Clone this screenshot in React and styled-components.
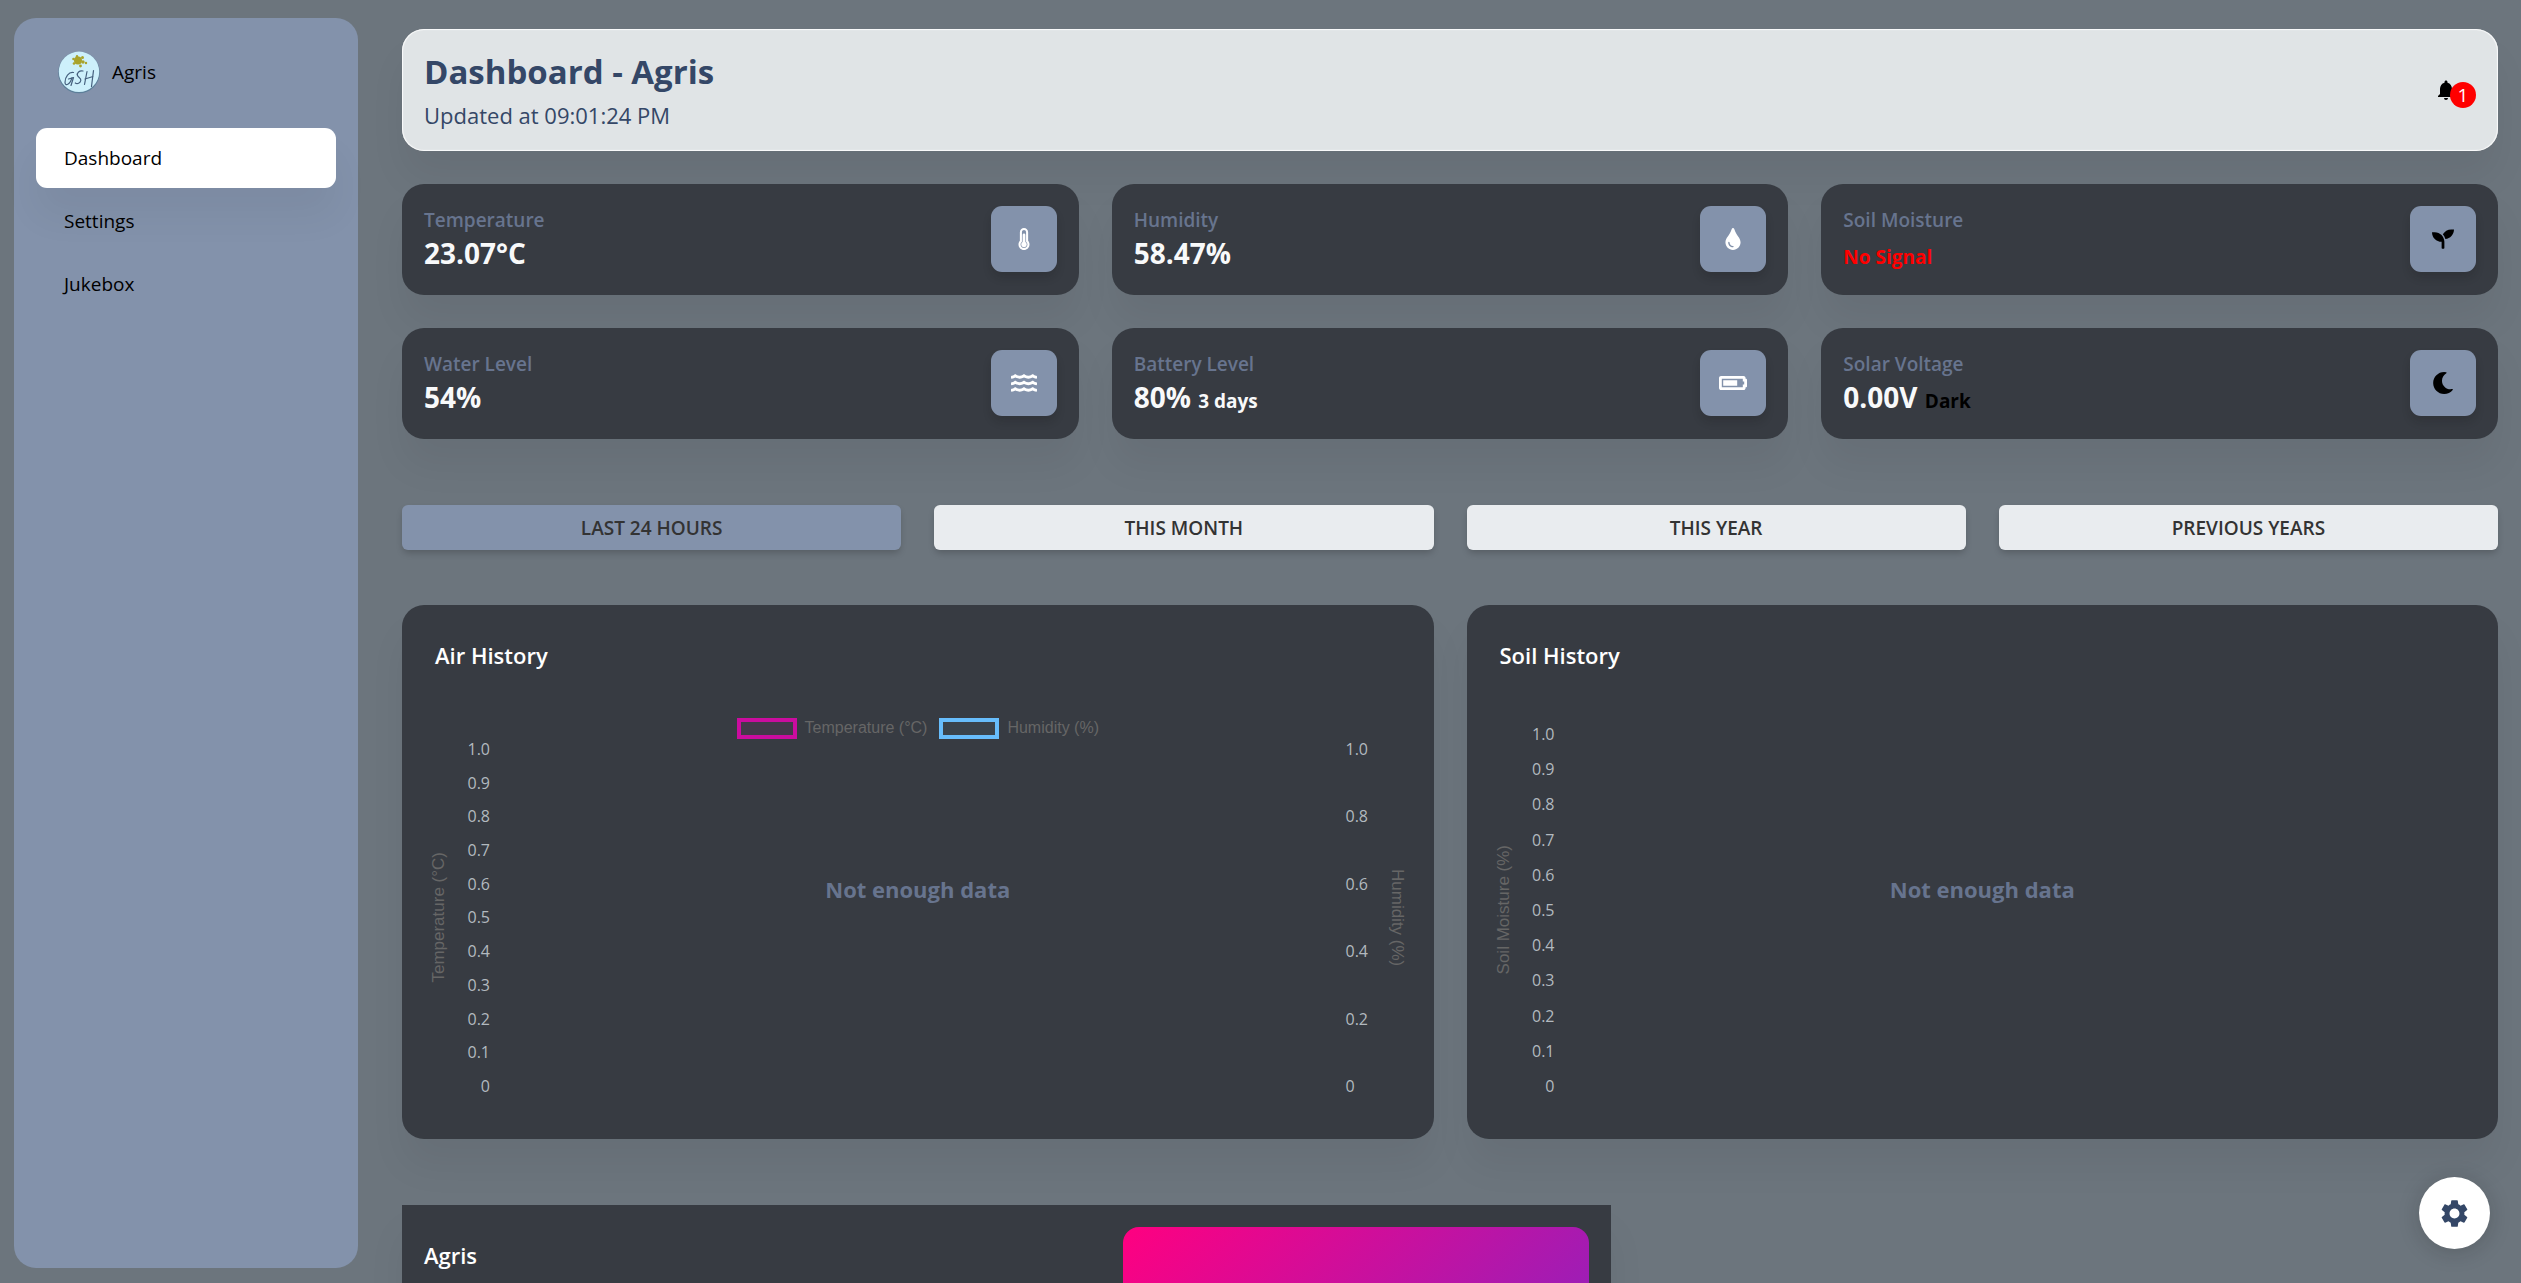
import React from "react";
import styled, { createGlobalStyle } from "styled-components";
import {
  FaBatteryThreeQuarters,
  FaMoon,
  FaSeedling,
  FaThermometerThreeQuarters,
  FaTint,
  FaWater,
} from "react-icons/fa";
import { MdNotifications, MdSettings } from "react-icons/md";

const GlobalStyle = createGlobalStyle`
  *, *::before, *::after { box-sizing: border-box; }
  body {
    margin: 0;
    background: #6c757d;
    color: #000;
    font-family: "Open Sans", "Noto Sans", sans-serif;
    font-size: 19px;
  }
  h1, h2, p { margin: 0; }
  button, a { font: inherit; color: inherit; }
`;

const Shell = styled.div`
  display: flex;
  height: 100vh;
  overflow: hidden;
`;

const Sidebar = styled.aside`
  flex: 0 0 344px;
  margin: 18px 0 15px 14px;
  padding: 32px 22px;
  border-radius: 22px;
  background: #8392ab;
`;

const Brand = styled.a`
  display: flex;
  align-items: center;
  gap: 12px;
  height: 44px;
  padding-left: 22px;
  margin-bottom: 34px;
  font-weight: 500;
  line-height: 28px;
  text-decoration: none;
`;

const NavList = styled.nav`
  display: flex;
  flex-direction: column;
  gap: 3px;
`;

const NavLink = styled.a`
  display: flex;
  align-items: center;
  height: 60px;
  padding: 0 28px;
  border-radius: 11px;
  line-height: 28px;
  font-weight: 500;
  text-decoration: none;
  background: ${(p) => (p.$active ? "#fff" : "transparent")};
  box-shadow: ${(p) => (p.$active ? "0 28px 37px 0 rgba(0, 0, 0, 0.05)" : "none")};
`;

const Main = styled.main`
  flex: 1;
  min-width: 0;
  overflow-y: auto;
  scrollbar-width: none;
  padding: 29px 23px 0 44px;
`;

const shadow = "0 28px 37px 0 rgba(0, 0, 0, 0.05)";

const Header = styled.header`
  display: flex;
  justify-content: space-between;
  align-items: center;
  height: 122px;
  padding: 6px 22px 0;
  margin-bottom: 33px;
  border-radius: 22px;
  background: #e0e4e6;
  color: #344767;
  box-shadow: inset 0 0 1px 1px rgba(254, 254, 254, 0.9), ${shadow};
`;

const Title = styled.h1`
  font-size: 33px;
  line-height: 44px;
  font-weight: 700;
`;

const Updated = styled.p`
  font-size: 22px;
  line-height: 42px;
`;

const BellButton = styled.button`
  position: relative;
  display: flex;
  width: 42px;
  height: 30px;
  padding: 0;
  border: 0;
  background: none;
  color: #000;
`;

const Badge = styled.span`
  position: absolute;
  right: 0;
  bottom: 0;
  width: 26px;
  height: 26px;
  border-radius: 13px;
  background: #f00;
  color: #fff;
  font-size: 19px;
  line-height: 26px;
  text-align: center;
`;

const StatGrid = styled.section`
  display: grid;
  grid-template-columns: repeat(3, 1fr);
  gap: 33px;
`;

const StatCard = styled.article`
  display: flex;
  justify-content: space-between;
  align-items: flex-start;
  height: 111px;
  padding: 22px;
  border-radius: 22px;
  background: #373b42;
  box-shadow: ${shadow};
`;

const StatLabel = styled.p`
  font-size: 19px;
  line-height: 28px;
  font-weight: 600;
  color: #67748e;
`;

const StatValue = styled.p`
  font-size: 28px;
  line-height: 38px;
  font-weight: 700;
  color: #f8f9fa;
`;

const StatNote = styled.span`
  font-size: 19px;
  color: ${(p) => p.$color};
`;

const IconTile = styled.div`
  display: grid;
  place-items: center;
  width: 66px;
  height: 66px;
  border-radius: 11px;
  background: #8392ab;
  color: ${(p) => p.$color};
  font-size: ${(p) => p.$size}px;
  box-shadow: 0 6px 10px -1px rgba(20, 20, 20, 0.2);
`;

const RangeBar = styled.div`
  display: grid;
  grid-template-columns: repeat(4, 1fr);
  gap: 33px;
  margin: 66px 0 55px;
`;

const RangeButton = styled.button`
  height: 45px;
  border: 0;
  border-radius: 6px;
  background: ${(p) => (p.$active ? "#8392ab" : "#e9ecef")};
  color: #333;
  font-size: 19px;
  font-weight: 600;
  line-height: 28px;
  box-shadow: 0 4px 7px -1px rgba(0, 0, 0, 0.2);
`;

const ChartGrid = styled.section`
  display: grid;
  grid-template-columns: repeat(2, 1fr);
  gap: 33px;
  margin-bottom: 66px;
`;

const ChartCard = styled.article`
  position: relative;
  display: flex;
  flex-direction: column;
  height: 534px;
  padding: 33px 22px 42px;
  border-radius: 22px;
  background: #373b42;
  box-shadow: ${shadow};
`;

const CardTitle = styled.h2`
  padding-left: ${(p) => p.$indent || 0}px;
  font-size: 22px;
  line-height: 34px;
  font-weight: 600;
  color: #fff;
`;

const Legend = styled.ul`
  display: flex;
  justify-content: center;
  align-items: center;
  gap: 12px;
  height: 20px;
  margin: 46px 0 0;
  padding: 0;
  list-style: none;
`;

const LegendItem = styled.li`
  display: flex;
  align-items: center;
  gap: 8px;
  color: #666;
  font-family: "Liberation Sans", Arial, sans-serif;
  font-size: 16px;
  line-height: 20px;

  &::before {
    content: "";
    width: 60px;
    height: 21px;
    border: 4px solid ${(p) => p.$color};
    background: ${(p) => p.$fill};
  }
`;

const Plot = styled.div`
  flex: 1;
  display: flex;
  justify-content: space-between;
  margin-top: ${(p) => p.$top}px;
`;

const Axis = styled.div`
  display: flex;
  flex-direction: ${(p) => (p.$right ? "row-reverse" : "row")};
  gap: 12px;
`;

const AxisTitle = styled.span`
  align-self: center;
  width: 30px;
  writing-mode: vertical-rl;
  rotate: ${(p) => (p.$right ? "0deg" : "180deg")};
  font-family: "Liberation Sans", Arial, sans-serif;
  font-size: 17px;
  line-height: 30px;
  text-align: center;
  color: #666;
`;

const Ticks = styled.ol`
  display: flex;
  flex-direction: column;
  justify-content: space-between;
  width: 24px;
  margin: 0;
  padding: 0;
  list-style: none;
  color: #b2b9bf;
  font-size: 16px;
  line-height: 22px;
  text-align: ${(p) => (p.$right ? "left" : "right")};
`;

const EmptyNote = styled.p`
  position: absolute;
  inset: 0;
  top: 34px;
  display: grid;
  place-items: center;
  color: #67748e;
  font-size: 22px;
  font-weight: 700;
`;

const PlayerCard = styled.section`
  display: flex;
  justify-content: space-between;
  width: calc(58% - 7px);
  height: 300px;
  padding: 22px;
  background: #373b42;
  box-shadow: ${shadow};
`;

const PlayerText = styled.div`
  padding-top: 11px;
`;

const Cover = styled.div`
  width: 40%;
  border-radius: 16px;
  background: linear-gradient(135deg, #ff0080, #7928ca);
`;

const Fab = styled.button`
  position: fixed;
  right: 31px;
  bottom: 34px;
  display: grid;
  place-items: center;
  width: 71px;
  height: 72px;
  padding: 0;
  border: 0;
  border-radius: 50%;
  background: #fff;
  color: #344767;
  font-size: 33px;
  box-shadow: 0 3px 22px 0 rgba(20, 20, 20, 0.2);
`;

function Logo() {
  return (
    <svg width="42" height="43" viewBox="0 0 42 43" aria-hidden="true">
      <circle cx="21" cy="21.5" r="20.800" fill="#5c7f99" />
      <circle cx="21" cy="20.800" r="20.200" fill="#cdf0fb" />
      <g fill="#a9a32c">
        <circle cx="20" cy="9.500" r="4" />
        <circle cx="15.500" cy="8" r="1.300" />
        <circle cx="24.500" cy="6.500" r="1.500" />
        <circle cx="16" cy="12.500" r="1.300" />
        <circle cx="25" cy="11" r="1.700" />
        <circle cx="28" cy="12" r="1.200" />
        <circle cx="22.500" cy="15" r="1.400" />
        <circle cx="19" cy="5.200" r="1.200" />
      </g>
      <g fill="none" stroke="#45607e" strokeWidth="1.200" strokeLinecap="round" strokeLinejoin="round">
        <path d="M15.500 21.500C11 20.500 6.800 26 7 31.500c.2 4 5 2.500 7-5M10.500 28l5-1.500-2.500 8" />
        <path d="M25 20c-3.500-1-6.500 2-5.500 4.500 .8 2 3.800 2.500 3.300 5-.4 2.500-3.500 4-5.500 2.500" />
        <path d="M29 20.500 26.500 33.500M35.500 19.500 33.500 35.500M27 28l8-2.500" />
      </g>
    </svg>
  );
}

const stats = [
  { label: "Temperature", value: "23.07°C", icon: <FaThermometerThreeQuarters />, color: "#fff", size: 22 },
  { label: "Humidity", value: "58.47%", icon: <FaTint />, color: "#fff", size: 22 },
  { label: "Soil Moisture", note: "No Signal", noteColor: "#f00", icon: <FaSeedling />, color: "#000", size: 22 },
  { label: "Water Level", value: "54%", icon: <FaWater />, color: "#fff", size: 26 },
  { label: "Battery Level", value: "80%", note: "3 days", noteColor: "#f8f9fa", icon: <FaBatteryThreeQuarters />, color: "#fff", size: 28 },
  { label: "Solar Voltage", value: "0.00V", note: "Dark", noteColor: "#000", icon: <FaMoon />, color: "#000", size: 22 },
];

const ranges = ["LAST 24 HOURS", "THIS MONTH", "THIS YEAR", "PREVIOUS YEARS"];
const tenths = ["1.0", "0.9", "0.8", "0.7", "0.6", "0.5", "0.4", "0.3", "0.2", "0.1", "0"];
const fifths = ["1.0", "0.8", "0.6", "0.4", "0.2", "0"];

function ValueAxis({ title, ticks, right }) {
  return (
    <Axis $right={right}>
      <AxisTitle $right={right}>{title}</AxisTitle>
      <Ticks $right={right}>
        {ticks.map((t) => (
          <li key={t}>{t}</li>
        ))}
      </Ticks>
    </Axis>
  );
}

export default function App() {
  return (
    <>
      <GlobalStyle />
      <Shell>
        <Sidebar>
          <Brand href="#home">
            <Logo />
            Agris
          </Brand>
          <NavList>
            <NavLink href="#dashboard" $active>Dashboard</NavLink>
            <NavLink href="#settings">Settings</NavLink>
            <NavLink href="#jukebox">Jukebox</NavLink>
          </NavList>
        </Sidebar>
        <Main>
          <Header>
            <div>
              <Title>Dashboard - Agris</Title>
              <Updated>Updated at 09:01:24 PM</Updated>
            </div>
            <BellButton aria-label="Notifications">
              <MdNotifications size={24} />
              <Badge>1</Badge>
            </BellButton>
          </Header>
          <StatGrid>
            {stats.map((s) => (
              <StatCard key={s.label}>
                <div>
                  <StatLabel>{s.label}</StatLabel>
                  <StatValue>
                    {s.value}
                    {s.value && s.note ? " " : null}
                    {s.note && <StatNote $color={s.noteColor}>{s.note}</StatNote>}
                  </StatValue>
                </div>
                <IconTile $color={s.color} $size={s.size}>{s.icon}</IconTile>
              </StatCard>
            ))}
          </StatGrid>
          <RangeBar>
            {ranges.map((r, i) => (
              <RangeButton key={r} $active={i === 0}>{r}</RangeButton>
            ))}
          </RangeBar>
          <ChartGrid>
            <ChartCard>
              <CardTitle $indent={11}>Air History</CardTitle>
              <Legend>
                <LegendItem $color="#cb0c9f" $fill="#43394a">Temperature (°C)</LegendItem>
                <LegendItem $color="#67bdfc" $fill="#3a434c">Humidity (%)</LegendItem>
              </Legend>
              <Plot $top={0}>
                <ValueAxis title="Temperature (°C)" ticks={tenths} />
                <ValueAxis title="Humidity (%)" ticks={fifths} right />
              </Plot>
              <EmptyNote>Not enough data</EmptyNote>
            </ChartCard>
            <ChartCard>
              <CardTitle $indent={11}>Soil History</CardTitle>
              <Plot $top={51}>
                <ValueAxis title="Soil Moisture (%)" ticks={tenths} />
              </Plot>
              <EmptyNote>Not enough data</EmptyNote>
            </ChartCard>
          </ChartGrid>
          <PlayerCard>
            <PlayerText>
              <CardTitle>Agris</CardTitle>
            </PlayerText>
            <Cover />
          </PlayerCard>
        </Main>
      </Shell>
      <Fab aria-label="Open settings">
        <MdSettings />
      </Fab>
    </>
  );
}
